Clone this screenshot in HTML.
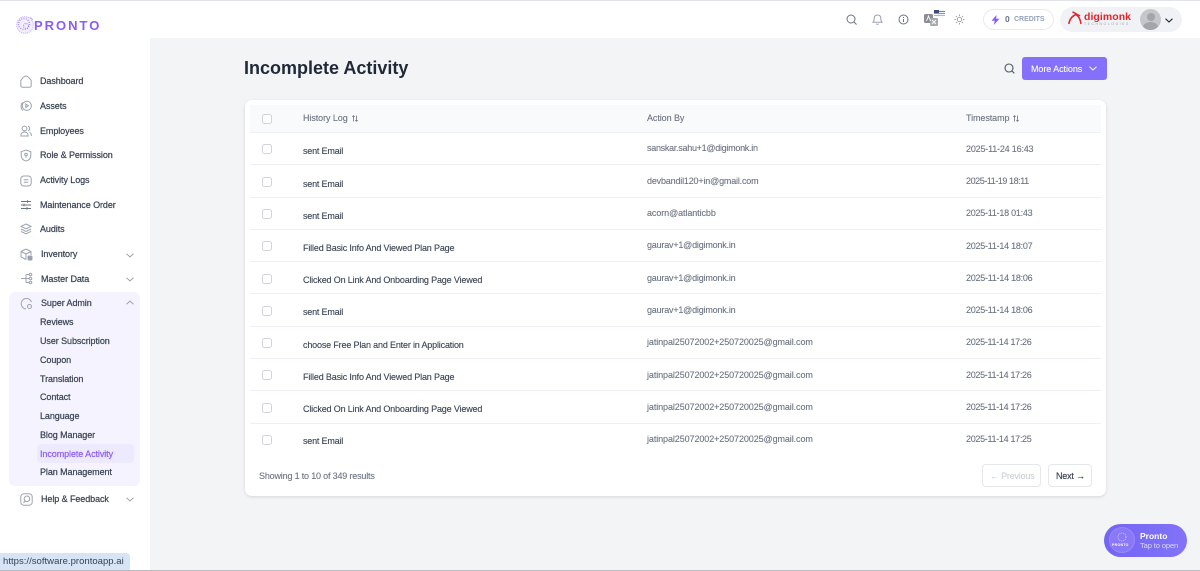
<!DOCTYPE html>
<html><head><meta charset="utf-8"><style>
*{box-sizing:border-box}
html,body{margin:0;padding:0}
body{width:1200px;height:571px;overflow:hidden;background:#f3f4f6;position:relative;font-family:"Liberation Sans",sans-serif;color:#374151}
.a{position:absolute;white-space:nowrap}
.top{left:0;top:0;width:1200px;height:38px;background:#fff;border-top:1px solid #e2e3e8}
.side{left:0;top:0;width:150px;height:571px;background:#fff;border-top:1px solid #e2e3e8}
.n{left:40px;font-size:9px;line-height:12px;color:#374151;letter-spacing:-.08px;-webkit-text-stroke:.2px #374151}
svg{position:absolute;overflow:visible}
.ic{fill:none;stroke:#9ca3af;stroke-width:1}
.c{left:262px;width:10px;height:10px;border:1px solid #d1d5db;border-radius:2.5px;background:#fff}
.l{height:1px;left:250px;width:851px;background:#eef0f5}
.t{left:303px;font-size:9px;line-height:12px;color:#374151;letter-spacing:-.16px;-webkit-text-stroke:.1px #374151}
.b{left:647px;font-size:9px;line-height:12px;color:#6b7280;-webkit-text-stroke:.1px #6b7280}
.d{left:966px;font-size:9px;line-height:12px;color:#6b7280;-webkit-text-stroke:.1px #6b7280}
.h{font-size:9px;line-height:12px;color:#6b7280;top:112px;letter-spacing:-.08px;-webkit-text-stroke:.1px #6b7280}
</style></head><body>
<div class="a top"></div>
<div class="a side"></div>

<svg style="left:15px;top:15px" width="20" height="20" viewBox="0 0 20 20"><circle cx="10" cy="10" r="8.300" fill="#f3effe" stroke="#c4b5fd" stroke-width="1" stroke-dasharray="1.200 .8"/><circle cx="9" cy="9" r="5.500" fill="none" stroke="#a78bfa" stroke-width="1.400" stroke-dasharray=".9 1.400"/><circle cx="11" cy="11" r="2.500" fill="none" stroke="#a78bfa" stroke-width="1.200" stroke-dasharray="1 1"/><path d="M15 2l3 3" stroke="#c4b5fd" stroke-width="1"/></svg>
<div class="a" style="left:34px;top:18px;font-size:13px;line-height:15px;font-weight:700;color:#8b5cf6;letter-spacing:2px">PRONTO</div>

<div class="a" style="left:9px;top:292px;width:131px;height:194px;background:#f5f3ff;border-radius:6px"></div>
<div class="a" style="left:37px;top:444px;width:97px;height:19px;background:#ede9fe;border-radius:4px"></div>

<div class="a n" style="top:75px">Dashboard</div>
<div class="a n" style="top:100px">Assets</div>
<div class="a n" style="top:125px">Employees</div>
<div class="a n" style="top:149px">Role &amp; Permission</div>
<div class="a n" style="top:174px">Activity Logs</div>
<div class="a n" style="top:199px">Maintenance Order</div>
<div class="a n" style="top:223px">Audits</div>
<div class="a n" style="top:248px;left:41px">Inventory</div>
<div class="a n" style="top:273px;left:41px">Master Data</div>
<div class="a n" style="top:297px;left:41px">Super Admin</div>
<div class="a n" style="top:316px">Reviews</div>
<div class="a n" style="top:335px">User Subscription</div>
<div class="a n" style="top:354px">Coupon</div>
<div class="a n" style="top:373px">Translation</div>
<div class="a n" style="top:391px">Contact</div>
<div class="a n" style="top:410px">Language</div>
<div class="a n" style="top:429px">Blog Manager</div>
<div class="a n" style="top:448px;color:#8b5cf6;-webkit-text-stroke:.2px #8b5cf6">Incomplete Activity</div>
<div class="a n" style="top:466px">Plan Management</div>
<div class="a n" style="top:493px;left:41px">Help &amp; Feedback</div>

<svg class="ic" style="left:20px;top:75px" width="12" height="13" viewBox="0 0 12 13"><path d="M.8 5.500C2 3.500 4 1.500 6 .8c2 .7 4 2.700 5.200 4.700v5a1.800 1.800 0 0 1-1.800 1.800H2.600A1.800 1.800 0 0 1 .8 10.500z"/></svg>
<svg class="ic" style="left:20px;top:100px" width="12" height="12" viewBox="0 0 12 12"><circle cx="6.800" cy="5.800" r="4.600"/><path d="M2.500 2.500C.5 4.500.5 8.500 3 10.500M5.800 4l2.500 1.800-2.500 1.800z"/></svg>
<svg class="ic" style="left:20px;top:125px" width="12" height="12" viewBox="0 0 12 12"><circle cx="4.500" cy="3.500" r="2.400"/><path d="M.8 11c0-2.500 1.500-4 3.700-4s3.700 1.500 3.700 4zM8 1.200a2.400 2.400 0 0 1 0 4.600M9.500 7.300c1.200.5 1.900 1.800 1.900 3.700"/></svg>
<svg class="ic" style="left:20px;top:149px" width="12" height="13" viewBox="0 0 12 13"><path d="M6 1 10.800 2.700v4C10.800 9.500 8.500 11.300 6 12 3.500 11.300 1.200 9.500 1.200 6.700v-4z"/><circle cx="6" cy="5.500" r="1.300"/><path d="M6 6.800v2"/></svg>
<svg class="ic" style="left:20px;top:175px" width="12" height="12" viewBox="0 0 12 12"><rect x=".8" y="1" width="10.400" height="10" rx="3"/><path d="M3.800 4.800h4.400M3.800 7.200h4.400"/></svg>
<svg class="ic" style="left:20px;top:199px;stroke:#6b7280" width="12" height="12" viewBox="0 0 12 12"><path d="M1 2.500h10M1 6h10M1 9.500h10"/><path d="M7.500 1.200v2.600M4 4.700v2.600M7 8.200v2.600"/></svg>
<svg class="ic" style="left:20px;top:223px" width="12" height="12" viewBox="0 0 12 12"><path d="M6 1 11 3.400 6 5.800 1 3.400zM1 6l5 2.400L11 6M1 8.400l5 2.400 5-2.400"/></svg>
<svg class="ic" style="left:20px;top:248px" width="13" height="13" viewBox="0 0 13 13"><path d="M6 1 11 3.500V7M1 3.500 6 1M1 3.500v5.500L6 11.500M1 3.500 6 6l5-2.500M6 6v5.500"/><rect x="8" y="8" width="4" height="4" rx="1" fill="#9ca3af"/></svg>
<svg class="ic" style="left:20px;top:272px" width="13" height="13" viewBox="0 0 13 13"><path d="M1 6.500h5M6 2.500v8M6 2.500h3M6 6.500h3M6 10.500h3"/><circle cx="10.500" cy="2.500" r="1.300"/><circle cx="10.500" cy="6.500" r="1.300"/><circle cx="10.500" cy="10.500" r="1.300"/></svg>
<svg class="ic" style="left:20px;top:297px" width="13" height="13" viewBox="0 0 13 13"><path d="M11.500 5A5.300 5.300 0 1 0 6 12"/><circle cx="9.500" cy="9.500" r="2"/></svg>
<svg class="ic" style="left:20px;top:493px" width="13" height="13" viewBox="0 0 13 13"><rect x=".8" y=".8" width="11.400" height="11.400" rx="3"/><circle cx="7" cy="5.800" r="2.800"/><path d="M3.500 9.800 5 8"/></svg>

<svg class="ic" style="left:126px;top:253px" width="8" height="5" viewBox="0 0 8 5"><path d="M.5.700 4 4 7.500.7"/></svg>
<svg class="ic" style="left:126px;top:277px" width="8" height="5" viewBox="0 0 8 5"><path d="M.5.700 4 4 7.500.7"/></svg>
<svg class="ic" style="left:126px;top:300px" width="8" height="5" viewBox="0 0 8 5"><path d="M.5 4.300 4 1l3.500 3.300"/></svg>
<svg class="ic" style="left:126px;top:497px" width="8" height="5" viewBox="0 0 8 5"><path d="M.5.700 4 4 7.500.7"/></svg>

<svg class="ic" style="left:846px;top:14px;stroke:#6b7280" width="11" height="11" viewBox="0 0 11 11"><circle cx="5" cy="5" r="4"/><path d="m8 8 2.500 2.500"/></svg>
<svg class="ic" style="left:872px;top:14px;stroke:#9ca3af" width="11" height="11" viewBox="0 0 11 11"><path d="M1 8.300c1-1 1.200-2 1.200-3.800C2.200 2.300 3.500 1 5.500 1s3.300 1.300 3.300 3.500c0 1.800.2 2.800 1.200 3.800zM4.300 9.800c.6.700 1.800.7 2.400 0"/></svg>
<svg class="ic" style="left:898px;top:14px;stroke:#6b7280" width="11" height="11" viewBox="0 0 11 11"><circle cx="5.500" cy="5.500" r="4.500"/><path d="M5.500 5v3M5.500 3v1"/></svg>
<svg style="left:924px;top:10px" width="22" height="17" viewBox="0 0 22 17"><rect x="0" y="4" width="9" height="9" rx="1.500" fill="#8a8d93"/><rect x="6" y="8" width="8" height="8" rx="1.500" fill="#a5a8ad"/><path d="M2.500 11l2-5 2 5M8 10l4 4M12 10l-4 4" stroke="#fff" fill="none" stroke-width=".9"/><rect x="10" y="0" width="11" height="6" rx="1" fill="#f1f5f9"/><rect x="10" y="1" width="11" height="1" fill="#d9605a"/><rect x="10" y="3" width="11" height="1" fill="#e07a72"/><rect x="10" y="5" width="11" height="1" fill="#e8a49e"/><rect x="10" y="0" width="5" height="3" fill="#3b4a7a"/></svg>
<svg class="ic" style="left:954px;top:14px;stroke:#9ca3af" width="11" height="11" viewBox="0 0 11 11"><circle cx="5.500" cy="5.500" r="2.200"/><path d="M5.500.5v1.500M5.500 9v1.500M.5 5.500H2M9 5.500h1.500M2 2l1 1M8 8l1 1M2 9l1-1M8 3l1-1"/></svg>

<div class="a" style="left:983px;top:9px;width:71px;height:21px;border:1px solid #e8eaf0;border-radius:11px;background:#fff"></div>
<svg style="left:991px;top:15px" width="9" height="10" viewBox="0 0 9 10"><path d="M5.500 0 .5 5.800h3.200L2.800 10 8.500 3.800H5.200z" fill="#8b5cf6"/></svg>
<div class="a" style="left:1005px;top:14px;font-size:8.500px;line-height:11px;font-weight:700;color:#64748b">0</div>
<div class="a" style="left:1014px;top:14px;font-size:7px;line-height:11px;font-weight:700;color:#94a3b8;letter-spacing:-.02px">CREDITS</div>

<div class="a" style="left:1060px;top:7px;width:122px;height:25px;background:#f1f2f5;border-radius:13px"></div>
<svg style="left:1068px;top:11px" width="15" height="14" viewBox="0 0 15 14"><path d="M.8 13C1.500 8.500 4 5 8 3.500M4.500.8 12 5M8 3.500c3 2 4.500 5.500 5 9.500" fill="none" stroke="#e3242b" stroke-width="1.500"/></svg>
<div class="a" style="left:1084px;top:11px;font-size:10.500px;line-height:12px;font-weight:700;color:#e3242b;letter-spacing:.05px">digimonk</div>
<div class="a" style="left:1084px;top:22px;font-size:3.500px;line-height:5px;color:#9ca3af;letter-spacing:1.500px">TECHNOLOGIES</div>
<div class="a" style="left:1140px;top:9px;width:21px;height:21px;border-radius:50%;background:#c4c6ca;overflow:hidden"><div class="a" style="left:6.500px;top:3.500px;width:8px;height:8px;border-radius:50%;background:#a3a5aa"></div><div class="a" style="left:3px;top:13px;width:15px;height:10px;border-radius:50%;background:#a3a5aa"></div></div>
<svg style="left:1165px;top:18px" width="8" height="5" viewBox="0 0 8 5"><path d="M.5.700 4 4 7.500.700" fill="none" stroke="#1f2937" stroke-width="1.100"/></svg>

<div class="a" style="left:244px;top:57px;font-size:18px;line-height:23px;font-weight:700;color:#1f2937">Incomplete Activity</div>
<svg class="ic" style="left:1004px;top:63px;stroke:#4b5563;stroke-width:1.100" width="11" height="11" viewBox="0 0 11 11"><circle cx="5" cy="5" r="4"/><path d="m8 8 2.300 2.300"/></svg>
<div class="a" style="left:1022px;top:57px;width:85px;height:23px;background:#8470fb;border-radius:3px"></div>
<div class="a" style="left:1031px;top:63px;font-size:9px;line-height:12px;color:#fff;letter-spacing:-.07px;-webkit-text-stroke:.1px #fff">More Actions</div>
<svg style="left:1089px;top:66px" width="8" height="5" viewBox="0 0 8 5"><path d="M.5.700 4 4 7.500.700" fill="none" stroke="#fff" stroke-width="1"/></svg>

<div class="a" style="left:245px;top:100px;width:861px;height:396px;background:#fff;border-radius:7px;box-shadow:0 1px 3px rgba(0,0,0,.12)"></div>
<div class="a" style="left:250px;top:105px;width:851px;height:28px;background:#f9fafb"></div>

<div class="a c" style="top:114px"></div>
<div class="a h" style="left:303px">History Log</div>
<svg class="ic" style="left:352px;top:115px;stroke:#6b7280;stroke-width:.8" width="6" height="7" viewBox="0 0 6 7"><path d="M1.500 6.500V.7M.3 1.900 1.500.7l1.200 1.200M4.500.5v5.800M3.300 5.100l1.200 1.200 1.200-1.200"/></svg>
<div class="a h" style="left:647px">Action By</div>
<div class="a h" style="left:966px">Timestamp</div>
<svg class="ic" style="left:1013px;top:115px;stroke:#6b7280;stroke-width:.8" width="6" height="7" viewBox="0 0 6 7"><path d="M1.500 6.500V.7M.3 1.900 1.500.7l1.200 1.200M4.500.5v5.800M3.300 5.100l1.200 1.200 1.200-1.200"/></svg>

<div class="a l" style="top:132px"></div>
<div class="a l" style="top:164px"></div>
<div class="a l" style="top:197px"></div>
<div class="a l" style="top:229px"></div>
<div class="a l" style="top:261px"></div>
<div class="a l" style="top:293px"></div>
<div class="a l" style="top:326px"></div>
<div class="a l" style="top:358px"></div>
<div class="a l" style="top:390px"></div>
<div class="a l" style="top:423px"></div>

<div class="a c" style="top:144px"></div><div class="a t" style="top:145px;letter-spacing:-.2px">sent Email</div><div class="a b" style="top:142px;letter-spacing:-.28px">sanskar.sahu+1@digimonk.in</div><div class="a d" style="top:143px;letter-spacing:-.19px">2025-11-24 16:43</div>
<div class="a c" style="top:177px"></div><div class="a t" style="top:178px;letter-spacing:-.2px">sent Email</div><div class="a b" style="top:175px;letter-spacing:-.18px">devbandil120+in@gmail.com</div><div class="a d" style="top:175px;letter-spacing:-.44px">2025-11-19 18:11</div>
<div class="a c" style="top:209px"></div><div class="a t" style="top:210px;letter-spacing:-.2px">sent Email</div><div class="a b" style="top:207px;letter-spacing:-.09px">acorn@atlanticbb</div><div class="a d" style="top:207px;letter-spacing:-.25px">2025-11-18 01:43</div>
<div class="a c" style="top:241px"></div><div class="a t" style="top:242px">Filled Basic Info And Viewed Plan Page</div><div class="a b" style="top:239px;letter-spacing:-.2px">gaurav+1@digimonk.in</div><div class="a d" style="top:240px;letter-spacing:-.25px">2025-11-14 18:07</div>
<div class="a c" style="top:274px"></div><div class="a t" style="top:274px">Clicked On Link And Onboarding Page Viewed</div><div class="a b" style="top:272px;letter-spacing:-.2px">gaurav+1@digimonk.in</div><div class="a d" style="top:272px;letter-spacing:-.25px">2025-11-14 18:06</div>
<div class="a c" style="top:306px"></div><div class="a t" style="top:306px;letter-spacing:-.2px">sent Email</div><div class="a b" style="top:304px;letter-spacing:-.2px">gaurav+1@digimonk.in</div><div class="a d" style="top:304px;letter-spacing:-.25px">2025-11-14 18:06</div>
<div class="a c" style="top:338px"></div><div class="a t" style="top:339px;letter-spacing:-.17px">choose Free Plan and Enter in Application</div><div class="a b" style="top:336px;letter-spacing:-.09px">jatinpal25072002+250720025@gmail.com</div><div class="a d" style="top:336px;letter-spacing:-.31px">2025-11-14 17:26</div>
<div class="a c" style="top:370px"></div><div class="a t" style="top:371px">Filled Basic Info And Viewed Plan Page</div><div class="a b" style="top:369px;letter-spacing:-.09px">jatinpal25072002+250720025@gmail.com</div><div class="a d" style="top:369px;letter-spacing:-.31px">2025-11-14 17:26</div>
<div class="a c" style="top:403px"></div><div class="a t" style="top:403px">Clicked On Link And Onboarding Page Viewed</div><div class="a b" style="top:401px;letter-spacing:-.09px">jatinpal25072002+250720025@gmail.com</div><div class="a d" style="top:401px;letter-spacing:-.31px">2025-11-14 17:26</div>
<div class="a c" style="top:435px"></div><div class="a t" style="top:435px;letter-spacing:-.2px">sent Email</div><div class="a b" style="top:433px;letter-spacing:-.09px">jatinpal25072002+250720025@gmail.com</div><div class="a d" style="top:433px;letter-spacing:-.31px">2025-11-14 17:25</div>

<div class="a" style="left:259px;top:470px;font-size:9px;line-height:12px;color:#6b7280;letter-spacing:-.18px;-webkit-text-stroke:.1px #6b7280">Showing 1 to 10 of 349 results</div>

<div class="a" style="left:982px;top:464px;width:59px;height:23px;border:1px solid #e5e7eb;border-radius:4px;background:#fff"></div>
<div class="a" style="left:990px;top:470px;font-size:9px;line-height:12px;color:#c5c9d0;letter-spacing:-.2px">← Previous</div>
<div class="a" style="left:1048px;top:464px;width:44px;height:23px;border:1px solid #e5e7eb;border-radius:4px;background:#fff"></div>
<div class="a" style="left:1056px;top:470px;font-size:9px;line-height:12px;color:#374151;letter-spacing:-.2px;-webkit-text-stroke:.15px #374151">Next →</div>

<div class="a" style="left:1104px;top:524px;width:83px;height:33px;background:linear-gradient(90deg,#7464f5,#8273f8);border-radius:17px"></div>
<div class="a" style="left:1109px;top:527px;width:26px;height:26px;border-radius:50%;background:#8a79f7;border:1px solid #9889f8"></div>
<svg style="left:1117px;top:532px" width="10" height="10" viewBox="0 0 10 10"><circle cx="5" cy="5" r="4" fill="none" stroke="#d8d2fd" stroke-width=".8" stroke-dasharray="1 1"/></svg>
<div class="a" style="left:1112px;top:543px;font-size:3.500px;line-height:5px;color:#fff;font-weight:700;letter-spacing:.3px">PRONTO</div>
<div class="a" style="left:1140px;top:530px;font-size:8.500px;line-height:12px;font-weight:700;color:#fff">Pronto</div>
<div class="a" style="left:1140px;top:541px;font-size:7.500px;line-height:10px;color:#dcd8fd;letter-spacing:-.1px">Tap to open</div>

<div class="a" style="left:0;top:553px;width:130px;height:17px;background:#d6e4f7;border-top-right-radius:4px"></div>
<div class="a" style="left:3px;top:556px;font-size:9.500px;line-height:12px;color:#374151;letter-spacing:.03px">https://software.prontoapp.ai</div>
<div class="a" style="left:0;top:570px;width:1200px;height:1px;background:#b9bbbe"></div>
</body></html>
